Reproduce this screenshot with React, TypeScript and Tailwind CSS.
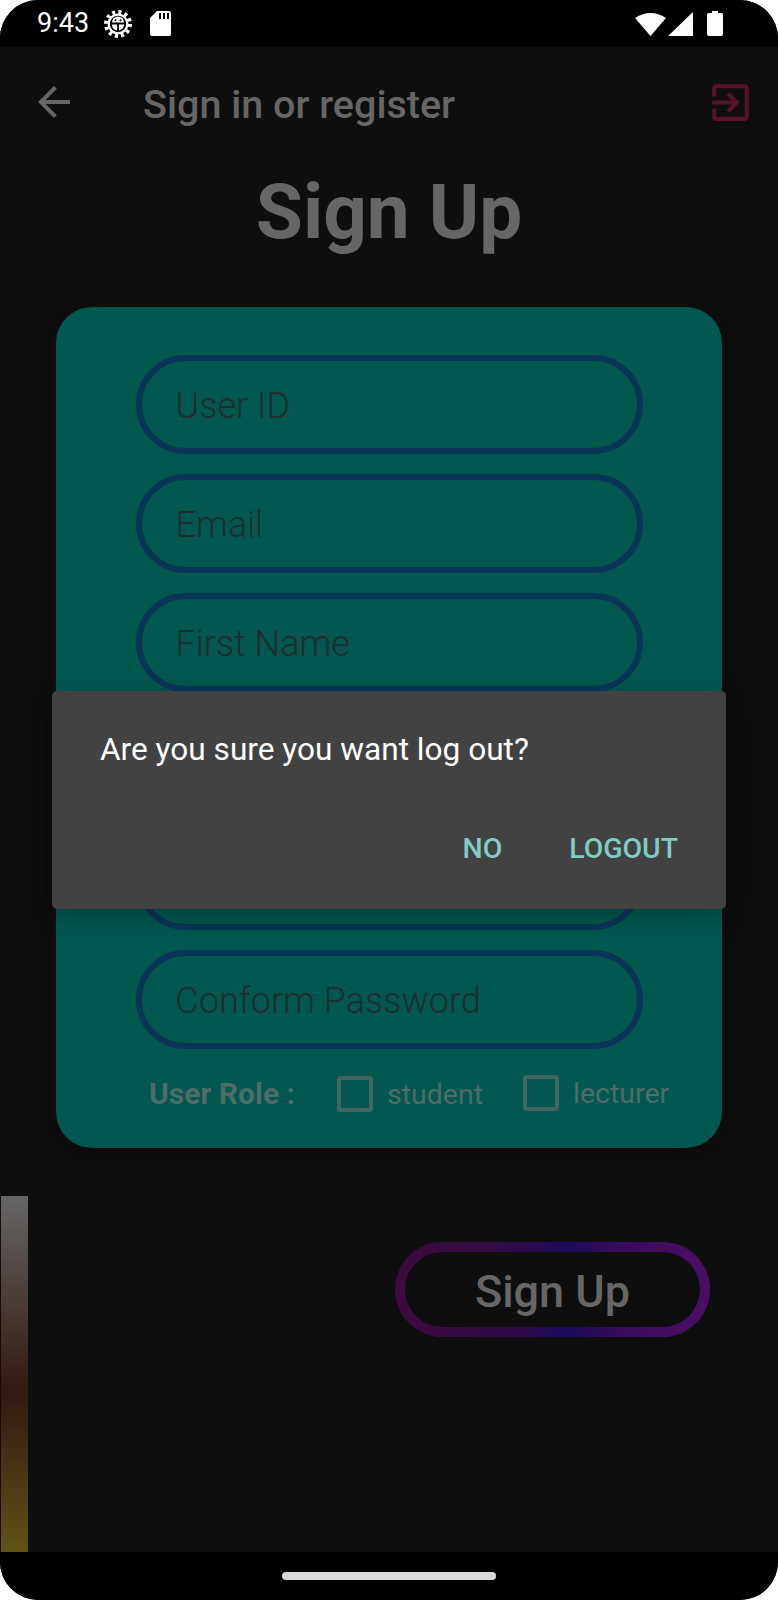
export default function App() {
  const fields = ["User ID", "Email", "First Name", "", "", "Conform Password"];
  return (
    <div className="w-[778px] h-[1600px] bg-white font-['Roboto',sans-serif]">
      <div className="relative w-full h-full rounded-[38px] overflow-hidden bg-[#0e0e0e] flex flex-col">
        <div className="h-[47px] shrink-0 bg-black flex items-center pl-[37px] pr-[55px] text-white">
          <span className="text-[27px] leading-none font-normal w-[67px]">9:43</span>
          <svg width="28" height="28" viewBox="0 0 28 28" className="mr-[18px]">
            <circle cx="14" cy="14" r="12" fill="none" stroke="#fff" strokeWidth="4" strokeDasharray="3.1 3.18" />
            <circle cx="14" cy="14" r="10.5" fill="#fff" />
            <circle cx="14" cy="14" r="8.200" fill="#000" />
            <path d="M8 12.500a6 6 0 0 1 12 0z" fill="#fff" />
            <path d="M7.800 14.500h5.300v6a7 7 0 0 1-5.300-6zM14.900 14.500h5.300a7 7 0 0 1-5.300 6z" fill="#fff" />
            <circle cx="11.500" cy="10.300" r="1.100" fill="#000" />
            <circle cx="16.500" cy="10.300" r="1.100" fill="#000" />
          </svg>
          <svg width="21" height="25" viewBox="0 0 21 25">
            <path d="M7 0h12a2 2 0 0 1 2 2v21a2 2 0 0 1-2 2H2a2 2 0 0 1-2-2V7z" fill="#fff" />
            <path d="M9 2h2v6H9zM13 2h2v6h-2zM17 2h2v6h-2z" fill="#000" />
          </svg>
          <div className="ml-auto flex items-center">
            <svg width="31" height="24" viewBox="0 0 31 24" className="mr-[2px]">
              <path d="M0 6Q15.500-4 31 6L15.500 24z" fill="#fff" />
            </svg>
            <svg width="25" height="24" viewBox="0 0 25 24" className="mr-[14px]">
              <path d="M25 0V24H0z" fill="#fff" />
            </svg>
            <svg width="16" height="25" viewBox="0 0 16 25">
              <path d="M5 0h6v2h3a2 2 0 0 1 2 2v19a2 2 0 0 1-2 2H2a2 2 0 0 1-2-2V4a2 2 0 0 1 2-2h3z" fill="#fff" />
            </svg>
          </div>
        </div>

        <div className="h-[108px] shrink-0 flex items-center pl-[30px] pr-[23px]">
          <svg width="48" height="48" viewBox="0 0 24 24" fill="#666666" className="mt-[2px]">
            <path d="M20 11H7.830l5.590-5.590L12 4l-8 8 8 8 1.410-1.410L7.830 13H20v-2z" />
          </svg>
          <span className="ml-[65px] mt-[8px] text-[39.500px] leading-none font-medium text-[#666666]">Sign in or register</span>
          <svg width="49" height="49" viewBox="0 0 24 24" fill="#5a1228" className="ml-auto mt-[3px]">
            <path d="M10.090 15.590L11.500 17l5-5-5-5-1.410 1.410L12.670 11H3v2h9.670l-2.580 2.590zM19 3H5c-1.110 0-2 .9-2 2v4h2V5h14v14H5v-4H3v4c0 1.100.89 2 2 2h14c1.100 0 2-.9 2-2V5c0-1.100-.9-2-2-2z" />
          </svg>
        </div>

        <h1 className="h-[152px] shrink-0 flex items-start justify-center pt-[9px] text-[76.500px] leading-[96px] font-bold text-[#666666]">Sign Up</h1>

        <div className="mx-[56px] h-[841px] shrink-0 rounded-[36px] bg-[#00584e] pt-[48px] flex flex-col shadow-[0_4px_12px_rgba(0,0,0,0.35)]">
          <div className="flex flex-col items-center gap-[20px]">
            {fields.map((f, i) => (
              <div key={i} className="w-[507px] h-[99px] rounded-full border-[6px] border-[#0a3558] flex items-center pl-[34px] pt-[2px] text-[36px] font-light text-[#222c2c]">
                {f}
              </div>
            ))}
          </div>
          <div className="flex items-center mt-[21px] pl-[93px] text-[#4f6c67]">
            <span className="text-[30px] font-bold w-[188px]">User Role :</span>
            <span className="w-[36px] h-[36px] mt-[2px] rounded-[3px] border-[4px] border-[#416660]" />
            <span className="ml-[14px] text-[28.500px] w-[136px] mt-[4px]">student</span>
            <span className="w-[36px] h-[36px] -mt-[1px] rounded-[3px] border-[4px] border-[#416660]" />
            <span className="ml-[14px] text-[28.500px] mt-[1px]">lecturer</span>
          </div>
        </div>

        <div className="flex-1 flex items-start relative">
          <div className="mt-[48px] ml-[1px] w-[27px] h-[356px] bg-gradient-to-b from-[#666666] via-[#301a12] via-55% to-[#5f5313]" />
          <div className="ml-[367px] mt-[94px] w-[315px] h-[95px] rounded-full p-[10px] bg-[linear-gradient(90deg,#3e0a3e_0%,#2f0a48_38%,#1a0a5c_55%,#3a0b5c_72%,#4b0e66_100%)]">
            <div className="w-full h-full rounded-full bg-[#0e0e0e] flex items-center justify-center pt-[4px] text-[45px] font-medium text-[#666666]">Sign Up</div>
          </div>
        </div>

        <div className="h-[48px] shrink-0 bg-black flex items-center justify-center">
          <div className="w-[214px] h-[8px] rounded-full bg-[#d8d8d8]" />
        </div>

        <div className="absolute left-[52px] top-[691px] w-[674px] h-[218px] rounded-[5px] bg-[#424242] shadow-[0_8px_24px_rgba(0,0,0,0.25)] flex flex-col pl-[48px] pr-[48px]">
          <p className="mt-[39px] text-[31.600px] leading-[40px] text-white">Are you sure you want log out?</p>
          <div className="mt-auto mb-[42px] flex justify-end gap-[67px] text-[28.400px] leading-[36px] font-medium text-[#80cbc4]">
            <span>NO</span>
            <span>LOGOUT</span>
          </div>
        </div>
      </div>
    </div>
  );
}
